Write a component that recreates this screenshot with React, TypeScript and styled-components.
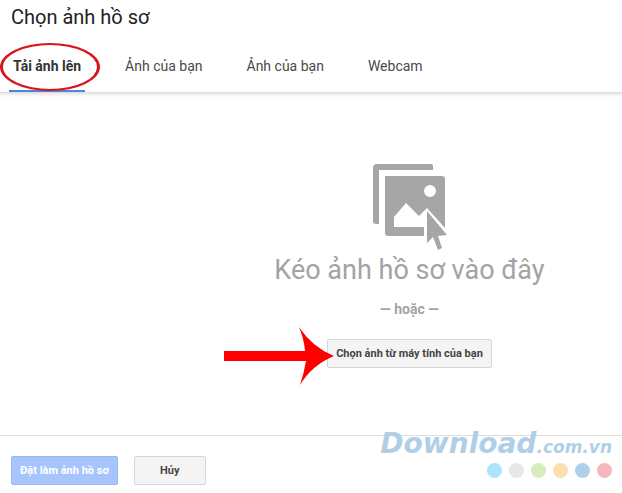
import React from "react";
import styled, { createGlobalStyle } from "styled-components";

const GlobalStyle = createGlobalStyle`
  *, *::before, *::after { box-sizing: border-box; }
  html, body, #root { height: 100%; }
  body {
    margin: 0;
    background: #fff;
    color: #222;
    font-family: Roboto, "Noto Sans", sans-serif;
    overflow: hidden;
  }
`;

const Dialog = styled.div`
  display: flex;
  flex-direction: column;
  min-height: 100%;
`;

const Title = styled.h1`
  margin: 0;
  padding: 3px 11px 0;
  font-size: 20px;
  font-weight: 400;
  line-height: 28px;
`;

const TabBar = styled.nav`
  display: flex;
  gap: 36px;
  padding: 9px 9px 0;
  border-bottom: 1px solid #dcdcdc;
  box-shadow: 0 2px 3px rgba(0, 0, 0, 0.1);
`;

const Tab = styled.button<{ $active?: boolean }>`
  position: relative;
  height: 52px;
  padding: 2px 4px 0;
  border: 0;
  border-bottom: 2px solid ${(p) => (p.$active ? "#4d86dd" : "transparent")};
  background: none;
  color: ${(p) => (p.$active ? "#333" : "#4a4a4a")};
  font-family: inherit;
  font-size: 14px;
  font-weight: ${(p) => (p.$active ? 700 : 400)};
  line-height: 20px;
  white-space: nowrap;
`;

const Ring = styled.svg`
  position: absolute;
  left: -10px;
  top: 3px;
  width: 102px;
  height: 49px;
  overflow: visible;
  pointer-events: none;
`;

const DropZone = styled.main`
  flex: 1;
  display: flex;
  flex-direction: column;
  align-items: center;
  padding: 71px 0 0 197px;
  color: #a3a3a3;
`;

const DropText = styled.p`
  margin: 0;
  padding-top: 4px;
  font-size: 27px;
  line-height: 32px;
  white-space: nowrap;
`;

const OrText = styled.p`
  margin: 0;
  padding: 13px 0 20px;
  font-size: 14px;
  font-weight: 700;
  line-height: 20px;
`;

const ButtonAnchor = styled.div`
  position: relative;
`;

const Arrow = styled.svg`
  position: absolute;
  right: 158px;
  top: -12px;
  width: 110px;
  height: 58px;
  pointer-events: none;
`;

const Button = styled.button<{ $primary?: boolean }>`
  height: 29px;
  min-width: 72px;
  padding: 0 8px;
  border: 1px solid ${(p) => (p.$primary ? "#98b9f0" : "#d6d6d6")};
  border-radius: 2px;
  background: ${(p) => (p.$primary ? "#a6c5fd" : "#f4f4f4")};
  color: ${(p) => (p.$primary ? "#fff" : "#444")};
  font-family: inherit;
  font-size: 11px;
  font-weight: 700;
  white-space: nowrap;
`;

const Footer = styled.footer`
  display: flex;
  align-items: flex-start;
  gap: 16px;
  height: 58px;
  padding: 20px 10px 0 11px;
  border-top: 1px solid #dedede;
`;

const Watermark = styled.div`
  display: flex;
  flex-direction: column;
  align-items: flex-end;
  margin: -28px 0 0 auto;
`;

const Brand = styled.div`
  color: #b0cfe7;
  font-family: "DejaVu Sans", sans-serif;
  font-size: 28px;
  font-style: italic;
  font-weight: 700;
  line-height: 32px;
  white-space: nowrap;
`;

const Domain = styled.span`
  font-size: 17px;
`;

const Dots = styled.div`
  display: flex;
  gap: 7px;
`;

const Dot = styled.span<{ $color: string }>`
  width: 15px;
  height: 15px;
  border-radius: 50%;
  background: ${(p) => p.$color};
`;

const dotColors = ["#abe5fc", "#e7e7e7", "#d6ecba", "#fddfac", "#b0cfe9", "#f8b7bd"];
const otherTabs = ["Ảnh của bạn", "Ảnh của bạn", "Webcam"];

function PhotosIcon() {
  return (
    <svg width="74" height="86" viewBox="0 0 74 86" aria-hidden="true">
      <path
        fill="#a6a6a6"
        d="M4 0H58Q60 0 60 2V6H6V60H3Q0 60 0 57V4Q0 0 4 0Z"
      />
      <path
        fill="#a6a6a6"
        fillRule="evenodd"
        d="M12 12H69Q72 12 72 15V64L54 44L46 52L33 39L21 53V63H51V72H15Q12 72 12 69Z M57 21A6 6 0 1 0 57 33A6 6 0 1 0 57 21Z"
      />
      <path
        fill="#a6a6a6"
        d="M54 47L74 71L65 72L69 84L65 86L60 73L54 79Z"
      />
    </svg>
  );
}

export default function App() {
  return (
    <>
      <GlobalStyle />
      <Dialog>
        <Title>Chọn ảnh hồ sơ</Title>
        <TabBar>
          <Tab $active aria-current="page">
            Tải ảnh lên
            <Ring viewBox="0 0 102 49" aria-hidden="true">
              <path
                fill="#d9141b"
                fillRule="evenodd"
                d="M1 24A50 24 0 1 1 101 24A50 24 0 1 1 1 24Z M4 24A47 22 0 1 0 98 24A47 22 0 1 0 4 24Z"
              />
            </Ring>
          </Tab>
          {otherTabs.map((label, i) => (
            <Tab key={i}>{label}</Tab>
          ))}
        </TabBar>
        <DropZone>
          <PhotosIcon />
          <DropText>Kéo ảnh hồ sơ vào đây</DropText>
          <OrText>— hoặc —</OrText>
          <ButtonAnchor>
            <Button>Chọn ảnh từ máy tính của bạn</Button>
            <Arrow viewBox="0 0 110 58" aria-hidden="true">
              <path fill="#fe0000" d="M0 24H81Q80 12 75 0Q88 20 110 29Q88 38 76 58Q80 46 82 34H0Z" />
            </Arrow>
          </ButtonAnchor>
        </DropZone>
        <Footer>
          <Button $primary>Đặt làm ảnh hồ sơ</Button>
          <Button>Hủy</Button>
          <Watermark>
            <Brand>
              Download<Domain>.com.vn</Domain>
            </Brand>
            <Dots>
              {dotColors.map((c) => (
                <Dot key={c} $color={c} />
              ))}
            </Dots>
          </Watermark>
        </Footer>
      </Dialog>
    </>
  );
}
